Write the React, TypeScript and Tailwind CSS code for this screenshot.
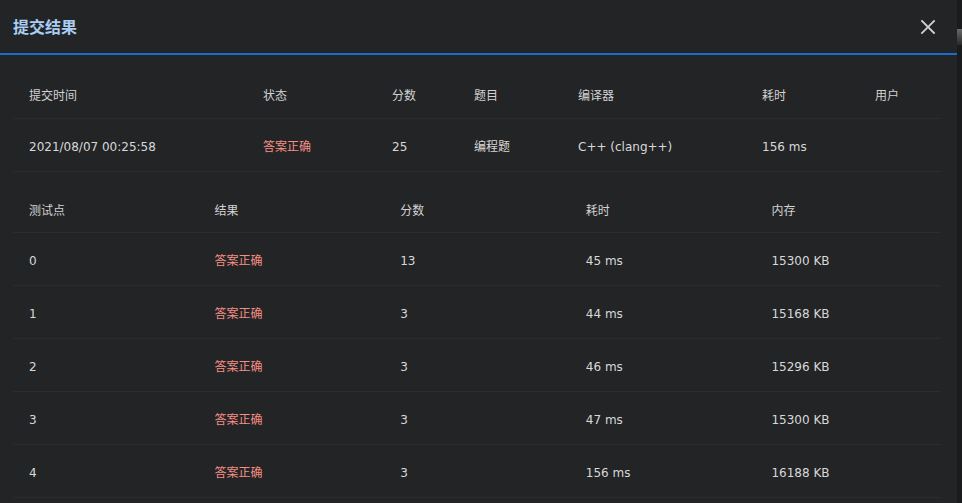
const font = "font-['DejaVu_Sans','Noto_Sans_CJK_SC',sans-serif]";

type Summary = {
  time: string;
  status: string;
  score: string;
  problem: string;
  compiler: string;
  cost: string;
  user: string;
};

const summary: Summary = {
  time: '2021/08/07 00:25:58',
  status: '答案正确',
  score: '25',
  problem: '编程题',
  compiler: 'C++ (clang++)',
  cost: '156 ms',
  user: '',
};

const cases = [
  { id: '0', result: '答案正确', score: '13', cost: '45 ms', mem: '15300 KB' },
  { id: '1', result: '答案正确', score: '3', cost: '44 ms', mem: '15168 KB' },
  { id: '2', result: '答案正确', score: '3', cost: '46 ms', mem: '15296 KB' },
  { id: '3', result: '答案正确', score: '3', cost: '47 ms', mem: '15300 KB' },
  { id: '4', result: '答案正确', score: '3', cost: '156 ms', mem: '16188 KB' },
];

const cols1 = 'grid grid-cols-[234px_129px_82px_104px_184px_113px_1fr]';
const cols2 = 'grid grid-cols-5';

function CloseIcon() {
  return (
    <svg width="16" height="16" viewBox="0 0 16 16" fill="none" stroke="#cfcfcf" strokeWidth="1.8" strokeLinecap="square">
      <path d="M2 2L14 14M14 2L2 14" />
    </svg>
  );
}

export default function App() {
  return (
    <div className={`flex h-[503px] w-[962px] overflow-hidden bg-[#232426] text-[12px] ${font}`}>
      <div className="flex flex-1 flex-col">
        <div className="flex h-[53px] items-center justify-between pl-[13px] pr-[21px]">
          <span className="pt-[2px] text-[16px] font-semibold text-[#a9cdf3]">提交结果</span>
          <button className="flex items-center justify-center">
            <CloseIcon />
          </button>
        </div>
        <div className="h-[2px] bg-[#1a6ad2]" />

        <div className="pl-[13px] pr-[16px] pt-[17px]">
          <div className={`${cols1} h-[47px] items-center border-b border-[#2b2c2e] pt-[2px] text-[#d2d2d2]`}>
            <div className="pl-[16px]">提交时间</div>
            <div className="pl-[16px]">状态</div>
            <div className="pl-[16px]">分数</div>
            <div className="pl-[16px]">题目</div>
            <div className="pl-[16px]">编译器</div>
            <div className="pl-[16px]">耗时</div>
            <div className="pl-[16px]">用户</div>
          </div>
          <div className={`${cols1} h-[53px] items-center border-b border-[#2b2c2e] pt-[4px] text-[#d8d8d8]`}>
            <div className="pl-[16px]">{summary.time}</div>
            <div className="pl-[16px] text-[#f58e84]">{summary.status}</div>
            <div className="pl-[16px]">{summary.score}</div>
            <div className="pl-[16px]">{summary.problem}</div>
            <div className="pl-[16px]">{summary.compiler}</div>
            <div className="pl-[16px]">{summary.cost}</div>
            <div className="pl-[16px]">{summary.user}</div>
          </div>

          <div className="mt-[15px]">
            <div className={`${cols2} h-[46px] items-center border-b border-[#2b2c2e] pt-[2px] text-[#d2d2d2]`}>
              <div className="pl-[16px]">测试点</div>
              <div className="pl-[16px]">结果</div>
              <div className="pl-[16px]">分数</div>
              <div className="pl-[16px]">耗时</div>
              <div className="pl-[16px]">内存</div>
            </div>
            {cases.map(c => (
              <div
                key={c.id}
                className={`${cols2} h-[53px] items-center border-b border-[#2b2c2e] pt-[4px] text-[#d8d8d8]`}
              >
                <div className="pl-[16px]">{c.id}</div>
                <div className="pl-[16px] text-[#f58e84]">{c.result}</div>
                <div className="pl-[16px]">{c.score}</div>
                <div className="pl-[16px]">{c.cost}</div>
                <div className="pl-[16px]">{c.mem}</div>
              </div>
            ))}
          </div>
        </div>
      </div>

      <div className="w-[5px] bg-[#1a1b1c]">
        <div className="mt-[29px] h-[16px] bg-gradient-to-b from-[#6a6a6a] to-[#2a2a2a]" />
      </div>
    </div>
  );
}
